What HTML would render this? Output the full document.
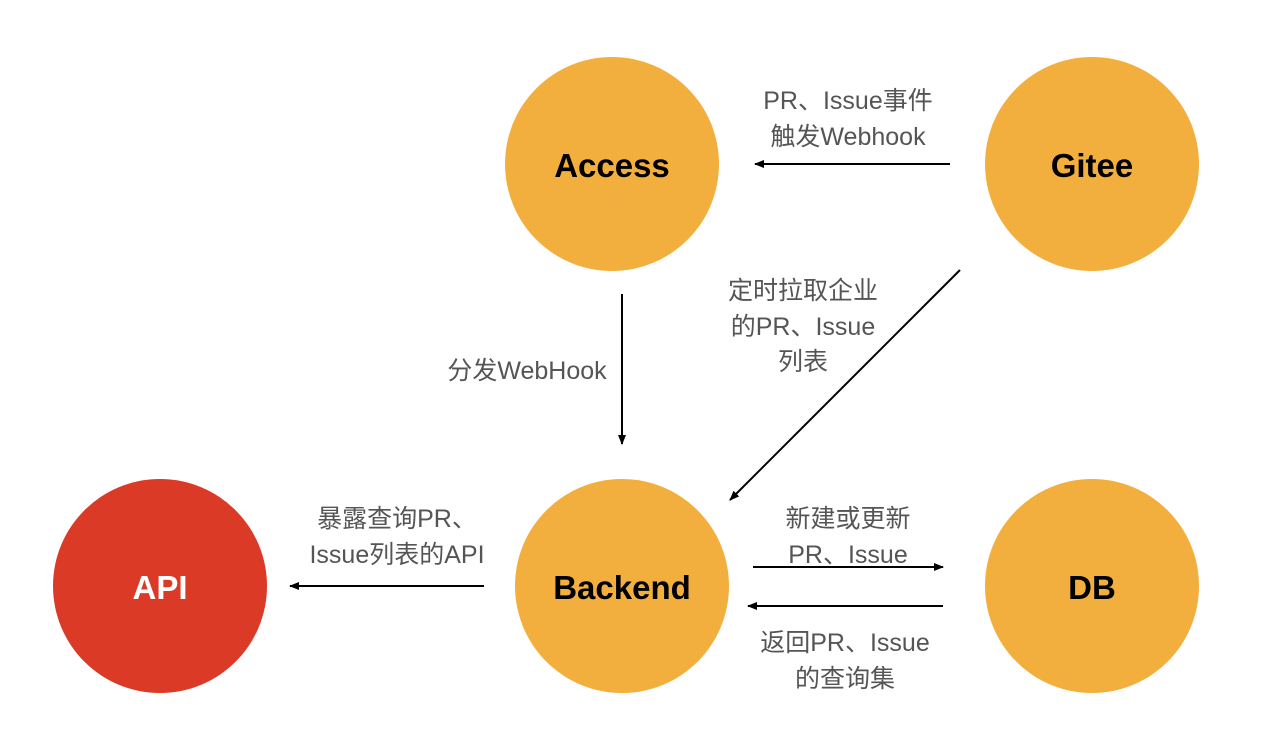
<!DOCTYPE html>
<html><head><meta charset="utf-8"><style>
body{margin:0;background:#fff;width:1262px;height:746px;overflow:hidden;position:relative;font-family:"Liberation Sans","Noto Sans CJK SC",sans-serif}
.c{position:absolute;width:214px;height:214px;border-radius:50%;background:#F2AF3D;display:flex;align-items:center;justify-content:center;font-weight:bold;font-size:33px;color:#000;box-sizing:border-box;padding-top:4px}
.t{position:absolute;color:#555;font-size:25px;line-height:35.5px;text-align:center;white-space:nowrap;transform:translateX(-50%)}
</style></head><body>
<div class="c" style="left:505px;top:57px">Access</div>
<div class="c" style="left:985px;top:57px">Gitee</div>
<div class="c" style="left:515px;top:479px">Backend</div>
<div class="c" style="left:985px;top:479px">DB</div>
<div class="c" style="left:53px;top:479px;background:#DB3A27;color:#fff">API</div>
<svg width="1262" height="746" style="position:absolute;left:0;top:0">
<defs><marker id="a" markerWidth="10" markerHeight="8" refX="9" refY="4" orient="auto" markerUnits="userSpaceOnUse"><path d="M0,0 L10,4 L0,8 z" fill="#000"/></marker></defs>
<g stroke="#000" stroke-width="2" marker-end="url(#a)">
<line x1="950" y1="164" x2="755" y2="164"/>
<line x1="622" y1="294" x2="622" y2="444"/>
<line x1="960" y1="270" x2="730" y2="500"/>
<line x1="753" y1="567" x2="943" y2="567"/>
<line x1="943" y1="606" x2="748" y2="606"/>
<line x1="484" y1="586" x2="290" y2="586"/>
</g></svg>
<div class="t" style="left:848px;top:84px">PR、Issue事件<br>触发Webhook</div>
<div class="t" style="left:803px;top:274px">定时拉取企业<br>的PR、Issue<br>列表</div>
<div class="t" style="left:527px;top:354px">分发WebHook</div>
<div class="t" style="left:397px;top:502px">暴露查询PR、<br>Issue列表的API</div>
<div class="t" style="left:848px;top:502px">新建或更新<br>PR、Issue</div>
<div class="t" style="left:845px;top:626px">返回PR、Issue<br>的查询集</div>
</body></html>
